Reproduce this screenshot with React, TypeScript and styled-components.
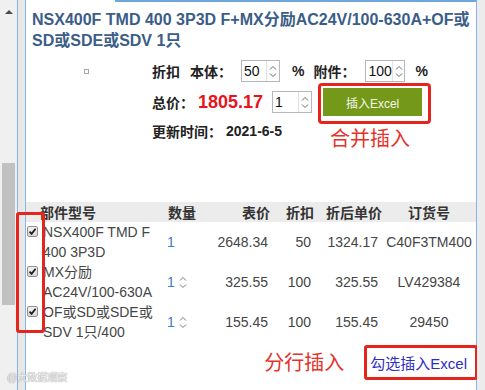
import React from "react";
import styled, { createGlobalStyle } from "styled-components";

const GlobalStyle = createGlobalStyle`
  html, body {
    margin: 0;
    padding: 0;
    background: #fff;
  }
  body {
    font-family: "Liberation Sans", "Noto Sans CJK SC", sans-serif;
  }
`;

const Frame = styled.div`
  position: relative;
  display: flex;
  width: 485px;
  height: 390px;
  overflow: hidden;
  background: #fff;
`;

const ScrollTrack = styled.div`
  flex: none;
  width: 17px;
  background: #f0f0f0;
  display: flex;
  flex-direction: column;
  align-items: center;
`;

const UpArrow = styled.div`
  margin-top: 10px;
  width: 0;
  height: 0;
  border-left: 4px solid transparent;
  border-right: 4px solid transparent;
  border-bottom: 4px solid #4a4a4a;
`;

const Thumb = styled.div`
  margin-top: 149px;
  width: 13px;
  height: 142px;
  background: #c1c1c1;
`;

const Gutter = styled.div`
  flex: none;
  width: 7px;
  border-left: 1px solid #86b6e6;
  background: #e8e8e8;
`;

const RightGutter = styled.div`
  flex: none;
  width: 8px;
  background: #ececec;
`;

const Panel = styled.div`
  flex: none;
  box-sizing: border-box;
  width: 452px;
  border-left: 1px solid #86b6e6;
  border-right: 1px solid #86b6e6;
  background: #fff;
  display: flex;
  flex-direction: column;
`;

const TopStrip = styled.div`
  height: 2px;
  margin-left: 89px;
  background: #6ea6dc;
`;

const Title = styled.h1`
  margin: 7px 0 0;
  padding: 0 4px 0 6px;
  font-size: 16px;
  line-height: 21px;
  font-weight: 700;
  color: #3b5d87;
`;

const Form = styled.div`
  margin-top: 9px;
  display: flex;
  flex-direction: column;
  gap: 6px;
`;

const FormRow = styled.div<{ $h: number }>`
  display: flex;
  align-items: center;
  height: ${(p) => p.$h}px;
`;

const Lead = styled.div`
  flex: none;
  width: 126px;
  display: flex;
  align-items: center;
`;

const Dot = styled.span`
  margin-left: 58px;
  width: 3px;
  height: 3px;
  border: 1px solid #a8a8a8;
`;

const Label = styled.span<{ $mr?: number }>`
  font-size: 14px;
  font-weight: 700;
  color: #222;
  white-space: nowrap;
  margin-right: ${(p) => p.$mr ?? 0}px;
`;

const Price = styled.span`
  font-size: 18px;
  font-weight: 700;
  color: #e8141c;
  margin-right: 9px;
`;

const SpinBox = styled.div<{ $w: number; $mr?: number }>`
  box-sizing: border-box;
  display: flex;
  width: ${(p) => p.$w}px;
  height: 22px;
  border: 1px solid #b4b8bd;
  background: #fff;
  margin-right: ${(p) => p.$mr ?? 0}px;
`;

const SpinValue = styled.span`
  flex: 1;
  padding-left: 2px;
  font-size: 14px;
  line-height: 20px;
  color: #111;
`;

const SpinArrows = styled.div`
  flex: none;
  width: 12px;
  border-left: 1px solid #e2e2e2;
  display: flex;
  flex-direction: column;
  align-items: center;
  justify-content: center;
  gap: 3px;
`;

const ButtonFrame = styled.div`
  position: relative;
  margin: -5px 0 -8px 6px;
  padding: 2px 6px 5px 2px;
  border: 3px solid #e4251e;
  border-radius: 4px;
`;

const GreenButton = styled.button`
  display: flex;
  align-items: center;
  justify-content: center;
  width: 99px;
  height: 28px;
  padding: 0;
  border: none;
  background: #74981a;
  color: #f4f6e6;
  font-family: inherit;
  font-size: 12px;
`;

const Note = styled.span<{ $size: number }>`
  font-size: ${(p) => p.$size}px;
  line-height: 22px;
  color: #e5322b;
  white-space: nowrap;
`;

const FloatNote = styled(Note)`
  position: absolute;
  left: 9px;
  top: 42px;
`;

const Table = styled.div`
  position: relative;
  margin-top: 62px;
`;

const Cols = `
  display: grid;
  grid-template-columns: 16px 123px 40px 67px 42px 68px 94px;
`;

const HeadRow = styled.div`
  ${Cols}
  height: 20px;
  align-items: center;
  background: #ececec;
  font-size: 14px;
  font-weight: 700;
  color: #333;
`;

const Cell = styled.div<{ $align?: string; $pl?: number; $pr?: number; $span?: number }>`
  text-align: ${(p) => p.$align ?? "left"};
  padding-left: ${(p) => p.$pl ?? 0}px;
  padding-right: ${(p) => p.$pr ?? 0}px;
  white-space: nowrap;
  ${(p) => (p.$span ? `grid-column: span ${p.$span};` : "")}
`;

const BodyRow = styled.div`
  ${Cols}
  height: 40px;
  align-items: center;
  font-size: 14px;
  color: #454545;
`;

const CheckCell = styled.div`
  align-self: start;
  padding: 4px 0 0 1px;
`;

const CheckBox = styled.span`
  box-sizing: border-box;
  display: flex;
  align-items: center;
  justify-content: center;
  width: 11px;
  height: 11px;
  border: 1px solid #8f8f8f;
  border-radius: 2px;
  background: linear-gradient(#f2f2f2, #d9d9d9);
`;

const NameCell = styled.div`
  align-self: start;
  padding-left: 1px;
  line-height: 20px;
`;

const QtyCell = styled.div`
  display: flex;
  align-items: center;
  gap: 4px;
  padding-left: 2px;
  color: #3a7cc6;
`;

const QtyArrows = styled.div`
  display: flex;
  flex-direction: column;
  gap: 3px;
`;

const CheckFrame = styled.div`
  position: absolute;
  left: -10px;
  top: 10px;
  width: 29px;
  height: 121px;
  box-sizing: border-box;
  border: 3px solid #e4251e;
  border-radius: 3px;
`;

const Footer = styled.div`
  display: flex;
  justify-content: flex-end;
  align-items: center;
  margin: 3px -2px 0 0;
`;

const LinkFrame = styled.div`
  box-sizing: border-box;
  display: flex;
  align-items: center;
  height: 35px;
  margin-left: 20px;
  padding: 0 8px 0 3px;
  border: 3px solid #e4251e;
  border-radius: 3px;
`;

const LinkText = styled.a`
  font-size: 15px;
  color: #2e2ec2;
  text-decoration: none;
  white-space: nowrap;
`;

const Watermark = styled.span`
  position: absolute;
  left: 7px;
  bottom: 6px;
  font-size: 10px;
  color: #f4f4f4;
  text-shadow: 0 0 1px #9a9a9a, 0 0 1px #9a9a9a;
  white-space: nowrap;
`;

function Chevron({ up, color = "#6a6a6a" }: { up?: boolean; color?: string }) {
  return (
    <svg width="8" height="5" viewBox="0 0 8 5">
      <polyline
        points={up ? "1,4.5 4,1.5 7,4.5" : "1,0.5 4,3.5 7,0.5"}
        fill="none"
        stroke={color}
        strokeWidth="1"
      />
    </svg>
  );
}

function Spinner({ value, w, mr }: { value: string; w: number; mr?: number }) {
  return (
    <SpinBox $w={w} $mr={mr}>
      <SpinValue>{value}</SpinValue>
      <SpinArrows>
        <Chevron up />
        <Chevron />
      </SpinArrows>
    </SpinBox>
  );
}

function Check() {
  return (
    <CheckBox>
      <svg width="9" height="9" viewBox="0 0 9 9">
        <path d="M1.5 4.6 L3.6 6.8 L7.6 1.8" fill="none" stroke="#1e1e1e" strokeWidth="1.8" />
      </svg>
    </CheckBox>
  );
}

interface Part {
  name: string;
  qty: string;
  spin: boolean;
  list: string;
  discount: string;
  net: string;
  order: string;
}

const parts: Part[] = [
  { name: "NSX400F TMD F 400 3P3D", qty: "1", spin: false, list: "2648.34", discount: "50", net: "1324.17", order: "C40F3TM400" },
  { name: "MX分励AC24V/100-630A", qty: "1", spin: true, list: "325.55", discount: "100", net: "325.55", order: "LV429384" },
  { name: "OF或SD或SDE或SDV 1只/400", qty: "1", spin: true, list: "155.45", discount: "100", net: "155.45", order: "29450" },
];

export default function App() {
  return (
    <>
      <GlobalStyle />
      <Frame>
        <ScrollTrack>
          <UpArrow />
          <Thumb />
        </ScrollTrack>
        <Gutter />
        <Panel>
          <TopStrip />
          <Title>NSX400F TMD 400 3P3D F+MX分励AC24V/100-630A+OF或SD或SDE或SDV 1只</Title>

          <Form>
            <FormRow $h={22}>
              <Lead>
                <Dot />
              </Lead>
              <Label $mr={10}>折扣</Label>
              <Label $mr={9}>本体：</Label>
              <Spinner value="50" w={39} mr={12} />
              <Label $mr={9}>%</Label>
              <Label $mr={10}>附件：</Label>
              <Spinner value="100" w={40} mr={10} />
              <Label>%</Label>
            </FormRow>
            <FormRow $h={28}>
              <Lead />
              <Label $mr={4}>总价：</Label>
              <Price>1805.17</Price>
              <Spinner value="1" w={40} />
              <ButtonFrame>
                <GreenButton>插入Excel</GreenButton>
                <FloatNote $size={20}>合并插入</FloatNote>
              </ButtonFrame>
            </FormRow>
            <FormRow $h={18}>
              <Lead />
              <Label $mr={4}>更新时间：</Label>
              <Label>2021-6-5</Label>
            </FormRow>
          </Form>

          <Table>
            <HeadRow>
              <Cell $span={2} $pl={14}>部件型号</Cell>
              <Cell $pl={3}>数量</Cell>
              <Cell $align="right" $pr={2}>表价</Cell>
              <Cell $align="right" $pr={0}>折扣</Cell>
              <Cell $align="right">折后单价</Cell>
              <Cell $align="center">订货号</Cell>
            </HeadRow>
            {parts.map((p) => (
              <BodyRow key={p.order}>
                <CheckCell>
                  <Check />
                </CheckCell>
                <NameCell>{p.name}</NameCell>
                <QtyCell>
                  {p.qty}
                  {p.spin && (
                    <QtyArrows>
                      <Chevron up color="#777" />
                      <Chevron color="#777" />
                    </QtyArrows>
                  )}
                </QtyCell>
                <Cell $align="right" $pr={4}>{p.list}</Cell>
                <Cell $align="right" $pr={3}>{p.discount}</Cell>
                <Cell $align="right" $pr={4}>{p.net}</Cell>
                <Cell $align="center">{p.order}</Cell>
              </BodyRow>
            ))}
            <CheckFrame />
          </Table>

          <Footer>
            <Note $size={20}>分行插入</Note>
            <LinkFrame>
              <LinkText href="#">勾选插入Excel</LinkText>
            </LinkFrame>
          </Footer>
        </Panel>
        <RightGutter />
        <Watermark>@大数据观察</Watermark>
      </Frame>
    </>
  );
}
